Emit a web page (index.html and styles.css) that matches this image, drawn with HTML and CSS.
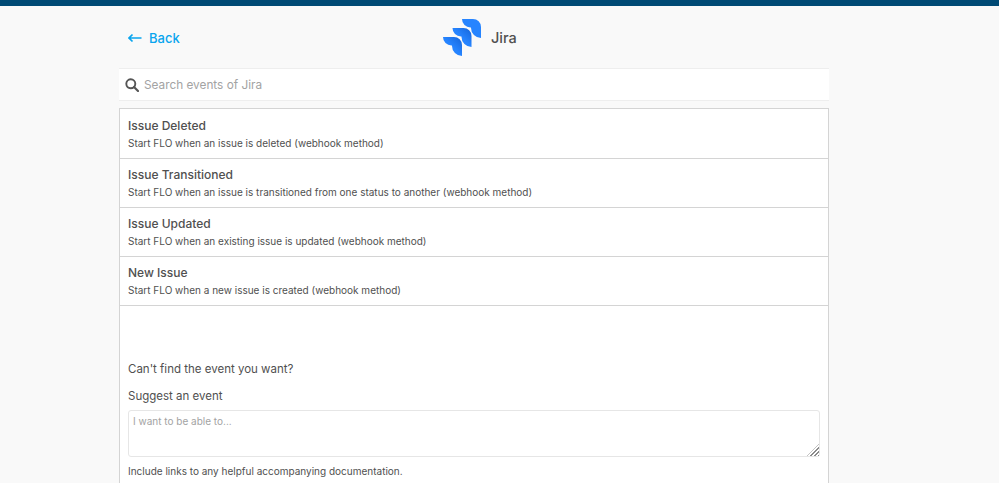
FILE: index.html
```html
<!DOCTYPE html>
<html lang="en">
<head>
    <meta charset="UTF-8">
    <title>Jira events</title>
    <link rel="stylesheet" href="styles.css">
</head>
<body>
    <div class="top-bar"></div>
    <div class="page">
        <div class="header">
            <a class="back" href="#">
                <svg width="14" height="10" viewBox="0 0 14 10"><path d="M4.5 1.5 1 5l3.5 3.5M1 5h12.5" fill="none" stroke="currentColor" stroke-width="1.7"/></svg>
                <span>Back</span>
            </a>
            <div class="app-name">
                <svg width="38" height="38" viewBox="0 0 38 38">
                    <defs>
                        <linearGradient id="fade" x1="1" y1="0" x2="0.5" y2="0.5">
                            <stop offset="0" stop-color="#1564d8"/>
                            <stop offset="1" stop-color="#2684ff"/>
                        </linearGradient>
                        <path id="blade" d="M0 0H11A8 8 0 0 1 19 8V19A10 10 0 0 1 9 9V8.500H8.500A8.500 8.500 0 0 1 0 0Z"/>
                    </defs>
                    <use href="#blade" x="19" y="0" fill="#2684ff"/>
                    <use href="#blade" x="9.500" y="9" fill="url(#fade)"/>
                    <use href="#blade" x="0" y="18" fill="url(#fade)"/>
                </svg>
                <span>Jira</span>
            </div>
        </div>
        <div class="search">
            <svg width="14" height="14" viewBox="0 0 14 14"><circle cx="5.8" cy="5.8" r="4.5" fill="none" stroke="#555" stroke-width="1.9"/><path d="M9 9l4 4" stroke="#555" stroke-width="2.2" stroke-linecap="round"/></svg>
            <input type="text" placeholder="Search events of Jira">
        </div>
        <div class="events">
            <div class="event">
                <div class="event-title">Issue Deleted</div>
                <div class="event-desc">Start FLO when an issue is deleted (webhook method)</div>
            </div>
            <div class="event">
                <div class="event-title">Issue Transitioned</div>
                <div class="event-desc">Start FLO when an issue is transitioned from one status to another (webhook method)</div>
            </div>
            <div class="event">
                <div class="event-title">Issue Updated</div>
                <div class="event-desc">Start FLO when an existing issue is updated (webhook method)</div>
            </div>
            <div class="event">
                <div class="event-title">New Issue</div>
                <div class="event-desc">Start FLO when a new issue is created (webhook method)</div>
            </div>
            <div class="suggest">
                <p class="cant-find">Can't find the event you want?</p>
                <label for="suggestion">Suggest an event</label>
                <div class="textarea-wrap">
                    <textarea id="suggestion" placeholder="I want to be able to..."></textarea>
                    <span class="grip"></span>
                </div>
                <p class="hint">Include links to any helpful accompanying documentation.</p>
            </div>
        </div>
    </div>
</body>
</html>
```

FILE: styles.css
```css
html, body {
    height: 483px;
    overflow: hidden;
}

body {
    margin: 0;
    font-family: Inter, Roboto, sans-serif;
    color: #505050;
    background-color: #f9f9f9;
}

.top-bar {
    height: 6px;
    background-color: #004a75;
}

.page {
    width: 710px;
    margin-left: 119px;
}

.header {
    display: flex;
    align-items: center;
    height: 62px;
    padding-top: 1px;
    box-sizing: border-box;
}

.back {
    display: flex;
    align-items: center;
    gap: 7px;
    width: 324px;
    padding-left: 9px;
    box-sizing: border-box;
    color: #0aa5ee;
    font-size: 13px;
    font-weight: 500;
    text-decoration: none;
}

.app-name {
    display: flex;
    align-items: center;
    gap: 10px;
    font-size: 14.5px;
    font-weight: 500;
}

.search {
    display: flex;
    align-items: center;
    gap: 5px;
    height: 33px;
    padding-left: 6px;
    box-sizing: border-box;
    background-color: #fff;
    border-top: 1px solid #eee;
    border-bottom: 1px solid #eee;
    margin-bottom: 7px;
}

.search input {
    flex: 1;
    border: none;
    outline: none;
    padding: 0;
    background: transparent;
    font-family: inherit;
    font-size: 11.8px;
}

.search input::placeholder {
    color: #a3a3a3;
}

.events {
    height: 374px;
    background-color: #fff;
    border: 1px solid #d4d4d4;
    border-bottom: none;
}

.event {
    padding: 8px 8px 0;
    height: 40px;
    border-bottom: 1px solid #d4d4d4;
}

.event:first-child {
    padding-top: 9px;
}

.event-title {
    font-size: 12px;
    font-weight: 500;
    line-height: 16px;
}

.event-desc {
    margin-top: 1px;
    font-size: 10px;
    line-height: 16px;
}

.suggest {
    padding: 55px 8px 0;
}

.cant-find {
    margin: 0 0 11px;
    font-size: 11.5px;
    line-height: 16px;
}

.suggest label {
    display: block;
    font-size: 11.5px;
    line-height: 16px;
}

.textarea-wrap {
    position: relative;
    margin-top: 6px;
}

.suggest textarea {
    display: block;
    width: 100%;
    height: 47px;
    padding: 4px;
    box-sizing: border-box;
    border: 1px solid #e6e6e6;
    border-radius: 3px;
    outline: none;
    resize: none;
    font-family: inherit;
    font-size: 10px;
}

.suggest textarea::placeholder {
    color: #a3a3a3;
}

.grip {
    position: absolute;
    right: 1px;
    bottom: 1px;
    width: 12px;
    height: 12px;
    background-image: repeating-linear-gradient(135deg, #8a8a8a 0 1.2px, #fff 1.2px 2.6px);
    clip-path: polygon(100% 0, 100% 100%, 0 100%);
}

.hint {
    margin: 7px 0 0;
    font-size: 10px;
    line-height: 14px;
}
```
